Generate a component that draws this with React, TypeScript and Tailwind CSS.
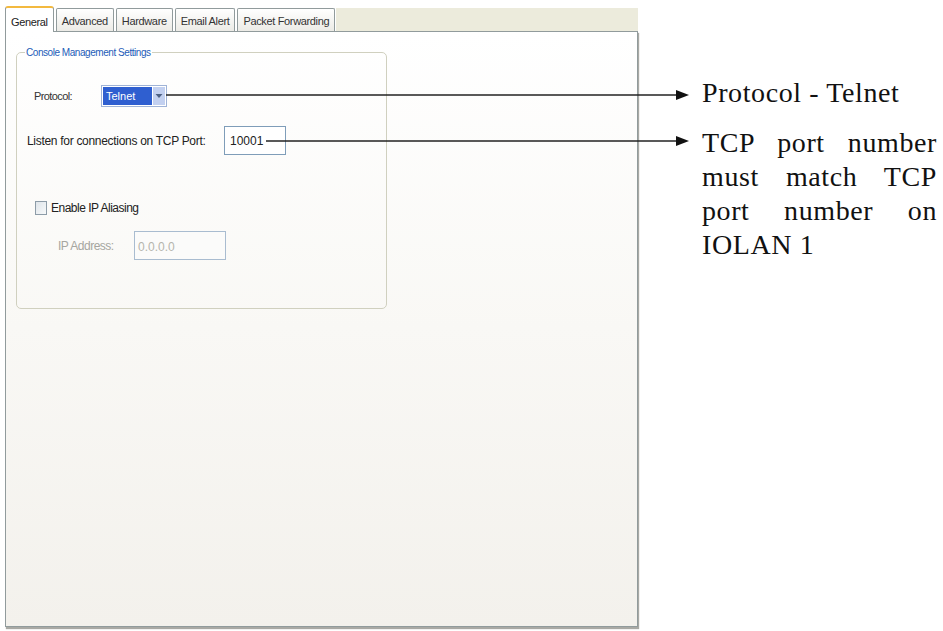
import React from 'react';

const tabs = ['General', 'Advanced', 'Hardware', 'Email Alert', 'Packet Forwarding'];

const Tab: React.FC<{ label: string; active?: boolean }> = ({ label, active }) =>
  active ? (
    <div className="relative z-10 -mb-px h-[26px] px-[5px] pt-[6px] bg-white border border-b-0 border-[#919b9c] border-t-2 border-t-[#f3b93f] rounded-t-[3px] text-[11px] tracking-[-0.35px] text-[#222]">
      {label}
    </div>
  ) : (
    <div className="h-[23px] px-[5px] pt-[4px] ml-[2px] bg-gradient-to-b from-white to-[#ecebe6] border border-b-0 border-[#919b9c] rounded-t-[2px] text-[11px] tracking-[-0.35px] text-[#333]">
      {label}
    </div>
  );

const Arrow: React.FC<{ x1: number; y: number }> = ({ x1, y }) => (
  <g>
    <line x1={x1} y1={y} x2={678} y2={y} stroke="#222" strokeWidth="1.6" />
    <polygon points={`676,${y - 5} 689,${y} 676,${y + 5}`} fill="#111" />
  </g>
);

export default function App() {
  return (
    <div className="relative w-[943px] h-[631px] bg-white flex font-['Liberation_Sans',Arial,sans-serif] overflow-hidden">
      {/* dialog */}
      <div className="w-[638px] pl-[5px] pt-[5px] flex flex-col">
        <div className="flex items-end h-[26px]">
          {tabs.map((t, i) => (
            <Tab key={t} label={t} active={i === 0} />
          ))}
          <div className="flex-1 h-[23px] ml-[1px] bg-[#ecebdc]" />
        </div>
        <div className="h-[596px] border border-[#919b9c] bg-gradient-to-b from-white via-[#f9f8f5] to-[#f3f1ec] shadow-[1px_2px_1px_#a9a9a4] pt-[13px] px-[10px]">
          <fieldset className="w-[371px] h-[264px] border border-[#d0d0bf] rounded-[5px] pl-[10px] pr-2">
            <legend className="px-[1px] ml-[-2px] text-[10px] tracking-[-0.45px] text-[#1d5cb8]">
              Console Management Settings
            </legend>
            <div className="flex items-center mt-[25px] ml-[7px] h-[22px]">
              <span className="w-[67px] text-[11px] tracking-[-0.6px] text-[#333]">Protocol:</span>
              <div className="flex h-[22px] border border-[#9fb3d7] bg-white p-[1px]">
                <span className="w-[49px] bg-[#2f5fd0] text-white text-[11px] px-[3px] leading-[18px]">Telnet</span>
                <span className="w-[12px] ml-[1px] bg-[#c2d0f0] flex items-center justify-center">
                  <svg width="8" height="6" viewBox="0 0 8 6">
                    <path d="M0.5 1 L4 5 L7.5 1 Z" fill="#4d6185" />
                  </svg>
                </span>
              </div>
            </div>
            <div className="flex items-center mt-[19px]">
              <span className="w-[197px] text-[12px] tracking-[-0.3px] text-[#222]">Listen for connections on TCP Port:</span>
              <div className="w-[62px] h-[29px] border border-[#7f9db9] bg-white text-[12px] text-[#222] px-[5px] pt-[5px]">
                10001
              </div>
            </div>
            <div className="flex items-center mt-[44px] ml-[8px]">
              <span className="w-[12px] h-[14px] border border-[#8d9ca8] bg-gradient-to-br from-[#dfe5ea] to-[#f7f9fa]" />
              <span className="ml-[4px] text-[12px] tracking-[-0.5px] text-[#222]">Enable IP Aliasing</span>
            </div>
            <div className="flex items-center mt-[14px] ml-[31px]">
              <span className="w-[76px] text-[12px] tracking-[-0.5px] text-[#a6a6a0]">IP Address:</span>
              <div className="w-[92px] h-[29px] border border-[#a9bcd0] bg-[#fbfbfa] text-[12px] text-[#b5b5ad] px-[3px] pt-[6px]">
                0.0.0.0
              </div>
            </div>
          </fieldset>
        </div>
      </div>

      {/* annotations */}
      <div className="flex-1 pl-[64px] pr-[6px] pt-[76px] font-['Liberation_Serif','Times_New_Roman',serif] text-[28px] leading-[34px] tracking-[0.6px] text-[#111]">
        <p>Protocol - Telnet</p>
        <p className="mt-[16px] text-justify">TCP port number must match TCP port number on IOLAN 1</p>
      </div>

      <svg className="absolute inset-0 pointer-events-none" width="943" height="631">
        <Arrow x1={166} y={95} />
        <Arrow x1={266} y={141} />
      </svg>
    </div>
  );
}
